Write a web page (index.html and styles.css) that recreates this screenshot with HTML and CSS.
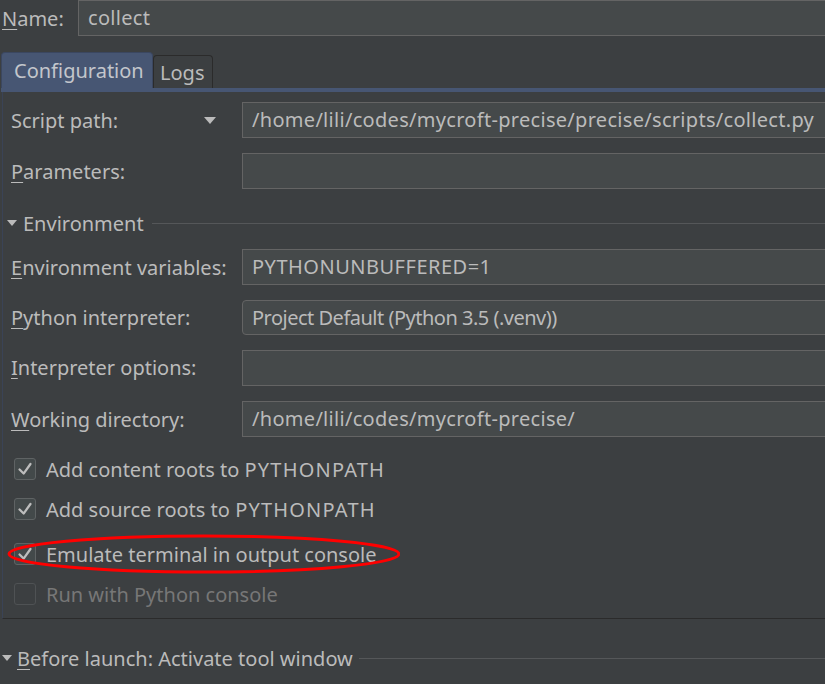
FILE: index.html
```html
<!DOCTYPE html>
<html>
<head>
<meta charset="utf-8">
<link rel="stylesheet" href="styles.css">
</head>
<body>
<div class="page">
  <div class="name-row">
    <label class="name-label"><u>N</u>ame:</label>
    <div class="field">collect</div>
  </div>

  <div class="tabs">
    <div class="tab tab-active">Configuration</div>
    <div class="tab tab-idle">Logs</div>
  </div>
  <div class="tab-strip"></div>

  <div class="panel">
    <div class="row r-script">
      <div class="label label-script">Script path:<span class="drop"></span></div>
      <div class="field">/home/lili/codes/mycroft-precise/precise/scripts/collect.py</div>
    </div>
    <div class="row r-params">
      <div class="label"><u>P</u>arameters:</div>
      <div class="field"></div>
    </div>

    <div class="section env">
      <span class="tri"></span><span class="section-title">Environment</span><span class="rule"></span>
    </div>

    <div class="row r-env">
      <div class="label"><u>E</u>nvironment variables:</div>
      <div class="field caps">PYTHONUNBUFFERED=1</div>
    </div>
    <div class="row r-py">
      <div class="label"><u>P</u>ython interpreter:</div>
      <div class="field combo">Project Default (Python 3.5 (.venv))</div>
    </div>
    <div class="row r-opts">
      <div class="label"><u>I</u>nterpreter options:</div>
      <div class="field"></div>
    </div>
    <div class="row r-wd">
      <div class="label"><u>W</u>orking directory:</div>
      <div class="field">/home/lili/codes/mycroft-precise/</div>
    </div>

    <div class="checks">
      <div class="check c1"><span class="box on"><svg viewBox="0 0 22 22"><polyline points="5,11.5 9.5,16 17,5.5"/></svg></span>Add content roots to&nbsp;<span class="cap">PYTHONPATH</span></div>
      <div class="check c2"><span class="box on"><svg viewBox="0 0 22 22"><polyline points="5,11.5 9.5,16 17,5.5"/></svg></span>Add source roots to&nbsp;<span class="cap">PYTHONPATH</span></div>
      <div class="check c3"><span class="box on"><svg viewBox="0 0 22 22"><polyline points="5,11.5 9.5,16 17,5.5"/></svg></span>Emulate terminal in output console</div>
      <div class="check c4 disabled"><span class="box"></span>Run with Python console</div>
    </div>
  </div>

  <div class="section before">
    <span class="tri"></span><span class="section-title"><u>B</u>efore launch: Activate tool window</span><span class="rule"></span>
  </div>

  <svg class="mark" width="400" height="46" viewBox="0 0 400 46"><ellipse cx="204" cy="23" rx="195" ry="18"/></svg>
</div>
</body>
</html>
```

FILE: styles.css
```css
html, body {
  margin: 0;
  padding: 0;
  background: #3c3f41;
  overflow: hidden;
}
.page {
  position: relative;
  width: 825px;
  height: 684px;
  overflow: hidden;
  display: flex;
  flex-direction: column;
  font-family: "Noto Sans", "Open Sans", sans-serif;
  font-size: 20px;
  color: #bbbbbb;
}
u {
  text-decoration: underline;
  text-underline-offset: 3px;
  text-decoration-thickness: 1px;
}
.field {
  box-sizing: border-box;
  height: 36px;
  flex: 1;
  margin-right: -20px;
  background: #45494a;
  border: 1px solid #646464;
  padding: 0 9px;
  line-height: 34px;
  white-space: nowrap;
  overflow: hidden;
  color: #bbbbbb;
  letter-spacing: 0.3px;
}
.field.caps {
  letter-spacing: 0.5px;
}
.combo {
  border-radius: 4px;
  height: 35px;
  line-height: 33px;
  letter-spacing: -0.5px;
}
.name-row {
  display: flex;
  align-items: center;
  height: 36px;
  flex: none;
}
.name-label {
  width: 78px;
  padding-left: 2px;
  box-sizing: border-box;
}
.tabs {
  display: flex;
  align-items: flex-end;
  margin-top: 16px;
  padding-left: 1px;
  height: 36px;
  flex: none;
}
.tab {
  box-sizing: border-box;
  line-height: 33px;
  border-radius: 4px 4px 0 0;
}
.tab-active {
  width: 152px;
  height: 36px;
  background: #475673;
  border: 1px solid #3b4760;
  border-bottom: none;
  padding-left: 12px;
  color: #c3c6cc;
  line-height: 36px;
}
.tab-idle {
  width: 60px;
  height: 33px;
  border: 1px solid #2b2b2b;
  border-bottom: none;
  padding-left: 6px;
  line-height: 34px;
  background: #3c3f41;
}
.tab-strip {
  height: 4px;
  flex: none;
  margin-left: 1px;
  background: #475673;
}
.panel {
  box-sizing: border-box;
  display: flex;
  flex-direction: column;
  flex: none;
  margin-left: 2px;
  height: 527px;
  border-left: 1px solid #3a4356;
  border-bottom: 1px solid #2b2b2b;
  padding: 10px 0 0 8px;
}
.row {
  display: flex;
  align-items: center;
  height: 36px;
  flex: none;
}
.r-params { margin-top: 15px; }
.r-env { margin-top: 14px; }
.r-py { margin-top: 15px; height: 35px; }
.r-opts { margin-top: 15px; height: 35px; }
.r-wd { margin-top: 16px; }
.label {
  width: 231px;
  flex: none;
  white-space: nowrap;
}
.label-script {
  display: flex;
  align-items: center;
}
.drop {
  margin-left: 86px;
  width: 0;
  height: 0;
  border-left: 6px solid transparent;
  border-right: 6px solid transparent;
  border-top: 7px solid #bbbbbb;
}
.section {
  display: flex;
  align-items: center;
  height: 24px;
  flex: none;
}
.env {
  margin-left: -7px;
  margin-top: 22px;
}
.tri {
  width: 0;
  height: 0;
  border-left: 5px solid transparent;
  border-right: 5px solid transparent;
  border-top: 6px solid #bbbbbb;
  margin-left: 3px;
  margin-right: 6px;
}
.rule {
  flex: 1;
  height: 1px;
  background: #555759;
  margin-left: 8px;
}
.checks {
  margin-top: 12px;
  margin-left: 3px;
  flex: none;
}
.check {
  display: flex;
  align-items: center;
  height: 40px;
  white-space: nowrap;
}
.cap {
  letter-spacing: 1.2px;
}
.check.c3 {
  margin-top: 5px;
}
.box {
  box-sizing: border-box;
  width: 22px;
  height: 22px;
  border: 1px solid #5f6364;
  border-radius: 3px;
  background: #43494a;
  margin-right: 10px;
  display: flex;
}
.box svg {
  width: 20px;
  height: 20px;
}
.box polyline {
  fill: none;
  stroke: #bdbdbd;
  stroke-width: 2.5;
  stroke-linecap: round;
  stroke-linejoin: round;
}
.disabled {
  color: #777777;
}
.disabled .box {
  background: transparent;
  border-color: #4f5254;
}
.before {
  margin-top: 27px;
  margin-left: -1px;
}
.before .tri {
  margin-right: 5px;
}
.before .rule {
  margin-left: 6px;
}
.mark {
  position: absolute;
  left: 0;
  top: 531px;
}
.mark ellipse {
  fill: none;
  stroke: #ff0000;
  stroke-width: 3;
}
```
